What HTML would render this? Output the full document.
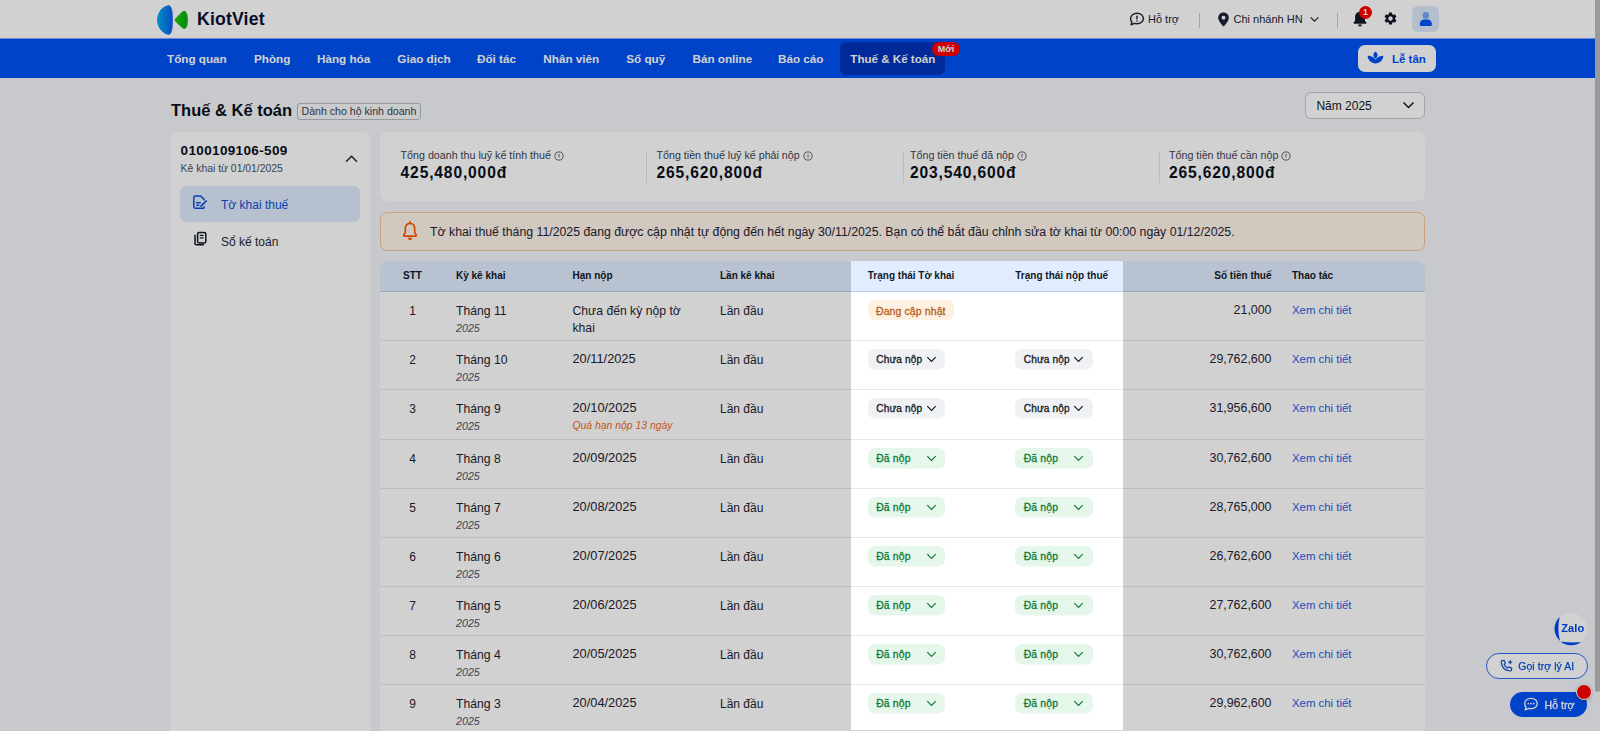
<!DOCTYPE html>
<html><head><meta charset="utf-8"><style>
html,body{margin:0;padding:0;width:1600px;height:731px;overflow:hidden;background:#f5f6f9}
body{position:relative;font-family:"Liberation Sans",sans-serif}
.t{position:absolute;line-height:1;white-space:nowrap}
.r{position:absolute}
</style></head><body>
<div class="r" style="left:0px;top:0px;width:1600px;height:38px;background:#fff"></div><svg class="r" style="left:150px;top:0" width="50" height="40" viewBox="150 0 50 40">
<defs><linearGradient id="lg" x1="0" x2="1" y1="0" y2="0"><stop offset="0" stop-color="#06b0f0"/><stop offset="1" stop-color="#0a5cf0"/></linearGradient>
<linearGradient id="lg2" x1="0" x2="1"><stop offset="0" stop-color="#20d010"/><stop offset="1" stop-color="#0aa514"/></linearGradient></defs>
<path d="M168.5 5.3 C171.5 5.6 172.8 10 172.8 20 C172.8 30 171.5 34.6 168.5 34.8 C163 34 157 28 157 20 C157 12 163 6 168.5 5.3 Z" fill="url(#lg)"/>
<path d="M184.2 10.8 C186.2 11 187.8 14 187.8 20 C187.8 26 186.2 28.8 184.2 29 C182.8 29 176 22.5 174.3 20 C176 17.5 182.8 10.8 184.2 10.8 Z" fill="url(#lg2)"/>
</svg><div class="t" style="left:197px;top:11.20px;font-size:17.6px;font-weight:bold;color:#0b1033;letter-spacing:0.2px">KiotViet</div><svg class="r" style="left:1129px;top:12px" width="16" height="14" viewBox="0 0 16 14"><path d="M8 1.2c3.6 0 6.4 2.4 6.4 5.3S11.6 11.8 8 11.8c-.9 0-1.8-.15-2.6-.45L2 12.8l.9-2.6C2 9.2 1.6 7.9 1.6 6.5 1.6 3.6 4.4 1.2 8 1.2z" fill="none" stroke="#1c2536" stroke-width="1.4" stroke-linejoin="round"/><rect x="7.3" y="3.6" width="1.4" height="3.8" rx=".6" fill="#1c2536"/><circle cx="8" cy="9" r=".8" fill="#1c2536"/></svg><div class="t" style="left:1148px;top:14.19px;font-size:11px;font-weight:normal;color:#1c2536;">Hỗ trợ</div><div class="r" style="left:1199px;top:13px;width:1px;height:15px;background:#c5c8ce"></div><svg class="r" style="left:1217px;top:12px" width="13" height="15" viewBox="0 0 13 15"><path d="M6.5 .6C3.3.6 1.2 3 1.2 5.8c0 3.3 3.7 7.3 5.3 8.8 1.6-1.5 5.3-5.5 5.3-8.8C11.8 3 9.7.6 6.5.6z" fill="#1c2536"/><circle cx="6.5" cy="5.7" r="1.9" fill="#fff"/></svg><div class="t" style="left:1233.5px;top:14.19px;font-size:11px;font-weight:normal;color:#1c2536;">Chi nhánh HN</div><svg class="r" style="left:1309px;top:15.5px" width="11" height="7" viewBox="0 0 11 7"><path d="M1.6 1.4 5.5 5.2 9.4 1.4" fill="none" stroke="#1c2536" stroke-width="1.15"/></svg><div class="r" style="left:1337px;top:13px;width:1px;height:15px;background:#c5c8ce"></div><svg class="r" style="left:1352px;top:10px" width="16" height="18" viewBox="0 0 16 18"><path d="M8 1.8c-2.9 0-4.9 2.2-4.9 5v3.4c0 .6-.3 1.1-.8 1.5-.6.5-.9.9-.9 1.3 0 .5.4.8.9.8h11.4c.5 0 .9-.3.9-.8 0-.4-.3-.8-.9-1.3-.5-.4-.8-.9-.8-1.5V6.8c0-2.8-2-5-4.9-5z" fill="#111827"/><path d="M6 14.6a2 2 0 0 0 4 0z" fill="#111827"/></svg><div class="r" style="left:1359px;top:6px;width:13px;height:13px;border-radius:50%;background:#ff0000;color:#fff;font:bold 9px/13px 'Liberation Sans';text-align:center">1</div><svg class="r" style="left:1383px;top:11px" width="15" height="15" viewBox="0 0 24 24"><path fill="#111827" d="M19.14 12.94c.04-.3.06-.61.06-.94 0-.32-.02-.64-.07-.94l2.03-1.58a.49.49 0 0 0 .12-.61l-1.92-3.32a.488.488 0 0 0-.59-.22l-2.39.96c-.5-.38-1.03-.7-1.62-.94l-.36-2.54a.484.484 0 0 0-.48-.41h-3.84c-.24 0-.43.17-.47.41l-.36 2.54c-.59.24-1.13.57-1.62.94l-2.39-.96a.49.49 0 0 0-.59.22L2.74 8.87c-.12.21-.08.47.12.61l2.03 1.58c-.05.3-.09.63-.09.94s.02.64.07.94l-2.03 1.58a.49.49 0 0 0-.12.61l1.92 3.32c.12.22.37.29.59.22l2.39-.96c.5.38 1.03.7 1.62.94l.36 2.54c.05.24.24.41.48.41h3.84c.24 0 .44-.17.47-.41l.36-2.54c.59-.24 1.13-.56 1.62-.94l2.39.96c.22.08.47 0 .59-.22l1.92-3.32c.12-.22.07-.47-.12-.61l-2.01-1.58zM12 15.6c-1.98 0-3.6-1.62-3.6-3.6s1.62-3.6 3.6-3.6 3.6 1.62 3.6 3.6-1.62 3.6-3.6 3.6z"/></svg><div class="r" style="left:1412px;top:5.5px;width:27px;height:26px;border-radius:6px;background:#dde8fa"></div><svg class="r" style="left:1412px;top:5.5px" width="27" height="26" viewBox="0 0 27 26"><circle cx="13.8" cy="9.4" r="3.3" fill="#74a6f0"/><path d="M7.9 19V17.8C7.9 15.5 9.7 13.6 12 13.6H15.6C17.9 13.6 19.8 15.5 19.8 17.8V19C19.8 19.6 19.4 20 18.8 20H8.9C8.3 20 7.9 19.6 7.9 19Z" fill="#0052f5"/></svg><div class="r" style="left:0px;top:38px;width:1600px;height:40px;background:#0052f5"></div><div class="r" style="left:0px;top:38px;width:1600px;height:1px;background:rgba(255,255,255,0.5)"></div><div class="r" style="left:840px;top:42px;width:105px;height:32.5px;background:#0032bc;border-radius:7px"></div><div class="t" style="left:167px;top:53.40px;font-size:11.7px;font-weight:bold;color:#fff;">Tổng quan</div><div class="t" style="left:254px;top:53.40px;font-size:11.7px;font-weight:bold;color:#fff;">Phòng</div><div class="t" style="left:317px;top:53.40px;font-size:11.7px;font-weight:bold;color:#fff;">Hàng hóa</div><div class="t" style="left:397.3px;top:53.40px;font-size:11.7px;font-weight:bold;color:#fff;">Giao dịch</div><div class="t" style="left:477px;top:53.40px;font-size:11.7px;font-weight:bold;color:#fff;">Đối tác</div><div class="t" style="left:543.3px;top:53.40px;font-size:11.7px;font-weight:bold;color:#fff;">Nhân viên</div><div class="t" style="left:626.3px;top:53.40px;font-size:11.7px;font-weight:bold;color:#fff;">Sổ quỹ</div><div class="t" style="left:692.5px;top:53.40px;font-size:11.7px;font-weight:bold;color:#fff;">Bán online</div><div class="t" style="left:778px;top:53.40px;font-size:11.7px;font-weight:bold;color:#fff;">Báo cáo</div><div class="t" style="left:850.3px;top:53.48px;font-size:11.6px;font-weight:bold;color:#fff;">Thuế &amp; Kế toán</div><div class="r" style="left:932px;top:42px;width:28px;height:14px;border-radius:7px;background:#ff0000;color:#fff;font:bold 9px/14px 'Liberation Sans';text-align:center">Mới</div><div class="r" style="left:1358px;top:45px;width:78px;height:27px;background:#fff;border-radius:7px"></div><svg class="r" style="left:1367px;top:51px" width="17" height="13" viewBox="0 0 17 13"><path d="M8.5 .4c1.3 1 2.1 2.3 2.1 3.6 0 1.5-.9 2.8-2.1 3.6C7.3 6.8 6.4 5.5 6.4 4c0-1.3.8-2.6 2.1-3.6z" fill="#0052f5"/><path d="M.6 4.8c2.6-.3 5.6.9 7.9 3.7 2.3-2.8 5.3-4 7.9-3.7-.4 4.6-3.8 7.6-7.9 7.6S1 9.4.6 4.8z" fill="#0052f5"/></svg><div class="t" style="left:1392px;top:53.57px;font-size:11.5px;font-weight:bold;color:#0052f5;">Lễ tân</div><div class="r" style="left:0px;top:78px;width:1600px;height:653px;background:#f5f6f9"></div><div class="t" style="left:171px;top:102.23px;font-size:16.5px;font-weight:bold;color:#0b0f1a;">Thuế &amp; Kế toán</div><div class="r" style="left:297px;top:103px;width:124px;height:16.5px;border:1px solid #b9bcc3;border-radius:3px;box-sizing:border-box;background:#f7f8fa"></div><div class="t" style="left:301.5px;top:106.13px;font-size:10.6px;font-weight:normal;color:#374151;">Dành cho hộ kinh doanh</div><div class="r" style="left:1305px;top:92px;width:120px;height:27px;border:1px solid #c4c8cf;border-radius:6px;box-sizing:border-box;background:#fff"></div><div class="t" style="left:1316.4px;top:99.84px;font-size:12px;font-weight:normal;color:#111827;">Năm 2025</div><svg class="r" style="left:1402px;top:101px" width="13" height="9" viewBox="0 0 13 9"><path d="M1.5 1.5 6.5 6.5 11.5 1.5" fill="none" stroke="#111827" stroke-width="1.5"/></svg><div class="r" style="left:170px;top:132px;width:200px;height:628px;background:#fff;border-radius:8px"></div><div class="t" style="left:180.6px;top:143.57px;font-size:13.5px;font-weight:bold;color:#0b0f1a;letter-spacing:0.35px">0100109106-509</div><div class="t" style="left:180.6px;top:163.50px;font-size:10.4px;font-weight:normal;color:#4b5263;">Kê khai từ 01/01/2025</div><svg class="r" style="left:344px;top:153px" width="15" height="11" viewBox="0 0 15 11"><path d="M2 8.7 7.5 3.2 13 8.7" fill="none" stroke="#1f2937" stroke-width="1.5"/></svg><div class="r" style="left:180px;top:185.5px;width:180px;height:36.5px;background:#deebfd;border-radius:6px"></div><svg class="r" style="left:192px;top:194px" width="16" height="16" viewBox="0 0 16 16"><path d="M12 6.2V5.4L8.6 2H3.2c-.8 0-1.4.6-1.4 1.4v9.4c0 .8.6 1.4 1.4 1.4h8c.5 0 .8-.3.8-.8v-1.2" fill="none" stroke="#0b4fd8" stroke-width="1.5" stroke-linejoin="round"/><path d="M4.2 8.7h4.6M4.2 11.2h3" stroke="#0b4fd8" stroke-width="1.4"/><path d="M9 12.2 14.2 7" stroke="#0b4fd8" stroke-width="1.7" stroke-linecap="round"/></svg><div class="t" style="left:221px;top:198.54px;font-size:12px;font-weight:normal;color:#0b4fd8;">Tờ khai thuế</div><svg class="r" style="left:193px;top:231px" width="15" height="15" viewBox="0 0 15 15"><rect x="4.6" y="1.4" width="8.2" height="10.6" rx="1.6" fill="none" stroke="#111827" stroke-width="1.5"/><path d="M2 4.2v8.2c0 .8.6 1.4 1.4 1.4h7" fill="none" stroke="#111827" stroke-width="1.5" stroke-linecap="round"/><path d="M6.8 4.4h3.8M6.8 6.8h3.8" stroke="#111827" stroke-width="1.3"/></svg><div class="t" style="left:221px;top:235.54px;font-size:12px;font-weight:normal;color:#1f2937;">Sổ kế toán</div><div class="r" style="left:380px;top:132px;width:1045px;height:69px;background:#fff;border-radius:8px"></div><div class="t" style="left:400.6px;top:150.19px;font-size:10.7px;color:#3d4352">Tổng doanh thu luỹ kế tính thuế<svg style="margin-left:3px;vertical-align:-2px" width="10" height="10" viewBox="0 0 10 10"><circle cx="5" cy="5" r="4.1" fill="none" stroke="#3d4352" stroke-width=".8"/><path d="M5 2.9v3.6" stroke="#3d4352" stroke-width=".8"/></svg></div><div class="t" style="left:400.6px;top:165.04px;font-size:15.6px;font-weight:bold;color:#0b0f1a;letter-spacing:0.85px">425,480,000đ</div><div class="t" style="left:656.5px;top:150.19px;font-size:10.7px;color:#3d4352">Tổng tiền thuế luỹ kế phải nộp<svg style="margin-left:3px;vertical-align:-2px" width="10" height="10" viewBox="0 0 10 10"><circle cx="5" cy="5" r="4.1" fill="none" stroke="#3d4352" stroke-width=".8"/><path d="M5 2.9v3.6" stroke="#3d4352" stroke-width=".8"/></svg></div><div class="t" style="left:656.5px;top:165.04px;font-size:15.6px;font-weight:bold;color:#0b0f1a;letter-spacing:0.85px">265,620,800đ</div><div class="t" style="left:910px;top:150.19px;font-size:10.7px;color:#3d4352">Tổng tiền thuế đã nộp<svg style="margin-left:3px;vertical-align:-2px" width="10" height="10" viewBox="0 0 10 10"><circle cx="5" cy="5" r="4.1" fill="none" stroke="#3d4352" stroke-width=".8"/><path d="M5 2.9v3.6" stroke="#3d4352" stroke-width=".8"/></svg></div><div class="t" style="left:910px;top:165.04px;font-size:15.6px;font-weight:bold;color:#0b0f1a;letter-spacing:0.85px">203,540,600đ</div><div class="t" style="left:1169px;top:150.19px;font-size:10.7px;color:#3d4352">Tổng tiền thuế cần nộp<svg style="margin-left:3px;vertical-align:-2px" width="10" height="10" viewBox="0 0 10 10"><circle cx="5" cy="5" r="4.1" fill="none" stroke="#3d4352" stroke-width=".8"/><path d="M5 2.9v3.6" stroke="#3d4352" stroke-width=".8"/></svg></div><div class="t" style="left:1169px;top:165.04px;font-size:15.6px;font-weight:bold;color:#0b0f1a;letter-spacing:0.85px">265,620,800đ</div><div class="r" style="left:646px;top:150.5px;width:1px;height:32.5px;background:#e3e5ea"></div><div class="r" style="left:902.5px;top:150.5px;width:1.0px;height:32.5px;background:#e3e5ea"></div><div class="r" style="left:1158.5px;top:150.5px;width:1.0px;height:32.5px;background:#e3e5ea"></div><div class="r" style="left:380px;top:212px;width:1045px;height:39px;background:#fff4ea;border:1px solid #f6c79d;border-radius:7px;box-sizing:border-box"></div><svg class="r" style="left:401px;top:221px" width="18" height="20" viewBox="0 0 18 20"><path d="M9 2.3C6 2.3 4.3 4.7 4.3 7.6v4L2.7 14c-.3.6 0 1.2.7 1.2h11.2c.7 0 1-.6.7-1.2l-1.6-2.4v-4c0-2.9-1.7-5.3-4.7-5.3z" fill="none" stroke="#ff5a00" stroke-width="1.7" stroke-linejoin="round"/><path d="M9 1v1.4" stroke="#ff5a00" stroke-width="1.8" stroke-linecap="round"/><path d="M6.8 16.8a2.2 2.2 0 0 0 4.4 0z" fill="#ff5a00"/></svg><div class="t" style="left:430px;top:225.69px;font-size:12.3px;font-weight:normal;color:#1f2330;">Tờ khai thuế tháng 11/2025 đang được cập nhật tự động đến hết ngày 30/11/2025. Bạn có thể bắt đầu chỉnh sửa tờ khai từ 00:00 ngày 01/12/2025.</div><div class="r" style="left:380px;top:261px;width:1045px;height:499px;background:#fff;border-radius:8px 8px 0 0"></div><div class="r" style="left:380px;top:261px;width:1045px;height:30px;background:#e1edfe;border-radius:8px 8px 0 0;border-bottom:1px solid #b8cdf0;box-sizing:content-box"></div><div class="t" style="left:403px;top:271.44px;font-size:10px;font-weight:bold;color:#111827;">STT</div><div class="t" style="left:456px;top:271.44px;font-size:10px;font-weight:bold;color:#111827;">Kỳ kê khai</div><div class="t" style="left:572.5px;top:271.44px;font-size:10px;font-weight:bold;color:#111827;">Hạn nộp</div><div class="t" style="left:720px;top:271.44px;font-size:10px;font-weight:bold;color:#111827;">Lần kê khai</div><div class="t" style="left:867.8px;top:271.44px;font-size:10px;font-weight:bold;color:#111827;">Trạng thái Tờ khai</div><div class="t" style="left:1015.3px;top:271.44px;font-size:10px;font-weight:bold;color:#111827;">Trạng thái nộp thuế</div><div class="t" style="right:328.5px;top:271.44px;font-size:10px;font-weight:bold;color:#111827">Số tiền thuế</div><div class="t" style="left:1292px;top:271.44px;font-size:10px;font-weight:bold;color:#111827;">Thao tác</div><div class="t" style="left:400px;width:25px;text-align:center;top:304.74px;font-size:12px;color:#1f2330">1</div><div class="t" style="left:456px;top:304.57px;font-size:12.2px;font-weight:normal;color:#1f2330;">Tháng 11</div><div class="t" style="left:456px;top:322.94px;font-size:10.7px;font-weight:normal;color:#4b5263;font-style:italic">2025</div><div class="t" style="left:572.5px;top:304.57px;font-size:12.2px;font-weight:normal;color:#1f2330;">Chưa đến kỳ nộp tờ</div><div class="t" style="left:572.5px;top:321.67px;font-size:12.2px;font-weight:normal;color:#1f2330;">khai</div><div class="t" style="left:720px;top:304.74px;font-size:12px;font-weight:normal;color:#1f2330;">Lần đầu</div><div class="r" style="left:867.5px;top:300.1px;width:86.5px;height:19.80000000000001px;background:#fff1e2;border-radius:6px"></div><div class="t" style="left:876.0px;top:305.51px;font-size:10.5px;font-weight:normal;color:#b5611a;-webkit-text-stroke:0.3px #b5611a;letter-spacing:0.1px">Đang cập nhật</div><div class="t" style="right:328.5px;top:304.40px;font-size:12.4px;color:#1f2330">21,000</div><div class="t" style="left:1292px;top:305.25px;font-size:11.4px;font-weight:normal;color:#2d5be3;">Xem chi tiết</div><div class="r" style="left:380px;top:340px;width:1045px;height:1px;background:#e6e8ec"></div><div class="t" style="left:400px;width:25px;text-align:center;top:353.74px;font-size:12px;color:#1f2330">2</div><div class="t" style="left:456px;top:353.57px;font-size:12.2px;font-weight:normal;color:#1f2330;">Tháng 10</div><div class="t" style="left:456px;top:371.94px;font-size:10.7px;font-weight:normal;color:#4b5263;font-style:italic">2025</div><div class="t" style="left:572.5px;top:353.06px;font-size:12.8px;font-weight:normal;color:#1f2330;">20/11/2025</div><div class="t" style="left:720px;top:353.74px;font-size:12px;font-weight:normal;color:#1f2330;">Lần đầu</div><div class="r" style="left:867.5px;top:349.1px;width:77.5px;height:20.0px;background:#eff1f4;border-radius:7px;box-shadow:0 1px 1px rgba(0,0,0,.03)"></div><div class="t" style="left:876.2px;top:355.15px;font-size:10.1px;font-weight:normal;color:#111827;-webkit-text-stroke:0.3px #111827;letter-spacing:0.15px">Chưa nộp</div><svg class="r" style="left:925.8px;top:356.1px" width="11" height="7" viewBox="0 0 11 7"><path d="M1.3 1.2 5.5 5.4 9.7 1.2" fill="none" stroke="#111827" stroke-width="1.2"/></svg><div class="r" style="left:1015px;top:349.1px;width:77.5px;height:20.0px;background:#eff1f4;border-radius:7px;box-shadow:0 1px 1px rgba(0,0,0,.03)"></div><div class="t" style="left:1023.7px;top:355.15px;font-size:10.1px;font-weight:normal;color:#111827;-webkit-text-stroke:0.3px #111827;letter-spacing:0.15px">Chưa nộp</div><svg class="r" style="left:1073.3px;top:356.1px" width="11" height="7" viewBox="0 0 11 7"><path d="M1.3 1.2 5.5 5.4 9.7 1.2" fill="none" stroke="#111827" stroke-width="1.2"/></svg><div class="t" style="right:328.5px;top:353.40px;font-size:12.4px;color:#1f2330">29,762,600</div><div class="t" style="left:1292px;top:354.25px;font-size:11.4px;font-weight:normal;color:#2d5be3;">Xem chi tiết</div><div class="r" style="left:380px;top:389px;width:1045px;height:1px;background:#e6e8ec"></div><div class="t" style="left:400px;width:25px;text-align:center;top:402.74px;font-size:12px;color:#1f2330">3</div><div class="t" style="left:456px;top:402.57px;font-size:12.2px;font-weight:normal;color:#1f2330;">Tháng 9</div><div class="t" style="left:456px;top:420.94px;font-size:10.7px;font-weight:normal;color:#4b5263;font-style:italic">2025</div><div class="t" style="left:572.5px;top:402.06px;font-size:12.8px;font-weight:normal;color:#1f2330;">20/10/2025</div><div class="t" style="left:572.5px;top:421.20px;font-size:10.4px;font-weight:normal;color:#f26a1b;font-style:italic">Quá hạn nộp 13 ngày</div><div class="t" style="left:720px;top:402.74px;font-size:12px;font-weight:normal;color:#1f2330;">Lần đầu</div><div class="r" style="left:867.5px;top:398.1px;width:77.5px;height:20.0px;background:#eff1f4;border-radius:7px;box-shadow:0 1px 1px rgba(0,0,0,.03)"></div><div class="t" style="left:876.2px;top:404.15px;font-size:10.1px;font-weight:normal;color:#111827;-webkit-text-stroke:0.3px #111827;letter-spacing:0.15px">Chưa nộp</div><svg class="r" style="left:925.8px;top:405.1px" width="11" height="7" viewBox="0 0 11 7"><path d="M1.3 1.2 5.5 5.4 9.7 1.2" fill="none" stroke="#111827" stroke-width="1.2"/></svg><div class="r" style="left:1015px;top:398.1px;width:77.5px;height:20.0px;background:#eff1f4;border-radius:7px;box-shadow:0 1px 1px rgba(0,0,0,.03)"></div><div class="t" style="left:1023.7px;top:404.15px;font-size:10.1px;font-weight:normal;color:#111827;-webkit-text-stroke:0.3px #111827;letter-spacing:0.15px">Chưa nộp</div><svg class="r" style="left:1073.3px;top:405.1px" width="11" height="7" viewBox="0 0 11 7"><path d="M1.3 1.2 5.5 5.4 9.7 1.2" fill="none" stroke="#111827" stroke-width="1.2"/></svg><div class="t" style="right:328.5px;top:402.40px;font-size:12.4px;color:#1f2330">31,956,600</div><div class="t" style="left:1292px;top:403.25px;font-size:11.4px;font-weight:normal;color:#2d5be3;">Xem chi tiết</div><div class="r" style="left:380px;top:439px;width:1045px;height:1px;background:#e6e8ec"></div><div class="t" style="left:400px;width:25px;text-align:center;top:452.74px;font-size:12px;color:#1f2330">4</div><div class="t" style="left:456px;top:452.57px;font-size:12.2px;font-weight:normal;color:#1f2330;">Tháng 8</div><div class="t" style="left:456px;top:470.94px;font-size:10.7px;font-weight:normal;color:#4b5263;font-style:italic">2025</div><div class="t" style="left:572.5px;top:452.06px;font-size:12.8px;font-weight:normal;color:#1f2330;">20/09/2025</div><div class="t" style="left:720px;top:452.74px;font-size:12px;font-weight:normal;color:#1f2330;">Lần đầu</div><div class="r" style="left:867.5px;top:448.1px;width:77.5px;height:20.0px;background:#e5f6eb;border-radius:7px;box-shadow:0 1px 1px rgba(0,0,0,.03)"></div><div class="t" style="left:876.2px;top:453.90px;font-size:10.4px;font-weight:normal;color:#0f7a35;-webkit-text-stroke:0.3px #0f7a35;letter-spacing:0.15px">Đã nộp</div><svg class="r" style="left:925.8px;top:455.1px" width="11" height="7" viewBox="0 0 11 7"><path d="M1.3 1.2 5.5 5.4 9.7 1.2" fill="none" stroke="#0f7a35" stroke-width="1.2"/></svg><div class="r" style="left:1015px;top:448.1px;width:77.5px;height:20.0px;background:#e5f6eb;border-radius:7px;box-shadow:0 1px 1px rgba(0,0,0,.03)"></div><div class="t" style="left:1023.7px;top:453.90px;font-size:10.4px;font-weight:normal;color:#0f7a35;-webkit-text-stroke:0.3px #0f7a35;letter-spacing:0.15px">Đã nộp</div><svg class="r" style="left:1073.3px;top:455.1px" width="11" height="7" viewBox="0 0 11 7"><path d="M1.3 1.2 5.5 5.4 9.7 1.2" fill="none" stroke="#0f7a35" stroke-width="1.2"/></svg><div class="t" style="right:328.5px;top:452.40px;font-size:12.4px;color:#1f2330">30,762,600</div><div class="t" style="left:1292px;top:453.25px;font-size:11.4px;font-weight:normal;color:#2d5be3;">Xem chi tiết</div><div class="r" style="left:380px;top:488px;width:1045px;height:1px;background:#e6e8ec"></div><div class="t" style="left:400px;width:25px;text-align:center;top:501.74px;font-size:12px;color:#1f2330">5</div><div class="t" style="left:456px;top:501.57px;font-size:12.2px;font-weight:normal;color:#1f2330;">Tháng 7</div><div class="t" style="left:456px;top:519.94px;font-size:10.7px;font-weight:normal;color:#4b5263;font-style:italic">2025</div><div class="t" style="left:572.5px;top:501.06px;font-size:12.8px;font-weight:normal;color:#1f2330;">20/08/2025</div><div class="t" style="left:720px;top:501.74px;font-size:12px;font-weight:normal;color:#1f2330;">Lần đầu</div><div class="r" style="left:867.5px;top:497.1px;width:77.5px;height:20.0px;background:#e5f6eb;border-radius:7px;box-shadow:0 1px 1px rgba(0,0,0,.03)"></div><div class="t" style="left:876.2px;top:502.90px;font-size:10.4px;font-weight:normal;color:#0f7a35;-webkit-text-stroke:0.3px #0f7a35;letter-spacing:0.15px">Đã nộp</div><svg class="r" style="left:925.8px;top:504.1px" width="11" height="7" viewBox="0 0 11 7"><path d="M1.3 1.2 5.5 5.4 9.7 1.2" fill="none" stroke="#0f7a35" stroke-width="1.2"/></svg><div class="r" style="left:1015px;top:497.1px;width:77.5px;height:20.0px;background:#e5f6eb;border-radius:7px;box-shadow:0 1px 1px rgba(0,0,0,.03)"></div><div class="t" style="left:1023.7px;top:502.90px;font-size:10.4px;font-weight:normal;color:#0f7a35;-webkit-text-stroke:0.3px #0f7a35;letter-spacing:0.15px">Đã nộp</div><svg class="r" style="left:1073.3px;top:504.1px" width="11" height="7" viewBox="0 0 11 7"><path d="M1.3 1.2 5.5 5.4 9.7 1.2" fill="none" stroke="#0f7a35" stroke-width="1.2"/></svg><div class="t" style="right:328.5px;top:501.40px;font-size:12.4px;color:#1f2330">28,765,000</div><div class="t" style="left:1292px;top:502.25px;font-size:11.4px;font-weight:normal;color:#2d5be3;">Xem chi tiết</div><div class="r" style="left:380px;top:537px;width:1045px;height:1px;background:#e6e8ec"></div><div class="t" style="left:400px;width:25px;text-align:center;top:550.74px;font-size:12px;color:#1f2330">6</div><div class="t" style="left:456px;top:550.57px;font-size:12.2px;font-weight:normal;color:#1f2330;">Tháng 6</div><div class="t" style="left:456px;top:568.94px;font-size:10.7px;font-weight:normal;color:#4b5263;font-style:italic">2025</div><div class="t" style="left:572.5px;top:550.06px;font-size:12.8px;font-weight:normal;color:#1f2330;">20/07/2025</div><div class="t" style="left:720px;top:550.74px;font-size:12px;font-weight:normal;color:#1f2330;">Lần đầu</div><div class="r" style="left:867.5px;top:546.1px;width:77.5px;height:20.0px;background:#e5f6eb;border-radius:7px;box-shadow:0 1px 1px rgba(0,0,0,.03)"></div><div class="t" style="left:876.2px;top:551.90px;font-size:10.4px;font-weight:normal;color:#0f7a35;-webkit-text-stroke:0.3px #0f7a35;letter-spacing:0.15px">Đã nộp</div><svg class="r" style="left:925.8px;top:553.1px" width="11" height="7" viewBox="0 0 11 7"><path d="M1.3 1.2 5.5 5.4 9.7 1.2" fill="none" stroke="#0f7a35" stroke-width="1.2"/></svg><div class="r" style="left:1015px;top:546.1px;width:77.5px;height:20.0px;background:#e5f6eb;border-radius:7px;box-shadow:0 1px 1px rgba(0,0,0,.03)"></div><div class="t" style="left:1023.7px;top:551.90px;font-size:10.4px;font-weight:normal;color:#0f7a35;-webkit-text-stroke:0.3px #0f7a35;letter-spacing:0.15px">Đã nộp</div><svg class="r" style="left:1073.3px;top:553.1px" width="11" height="7" viewBox="0 0 11 7"><path d="M1.3 1.2 5.5 5.4 9.7 1.2" fill="none" stroke="#0f7a35" stroke-width="1.2"/></svg><div class="t" style="right:328.5px;top:550.40px;font-size:12.4px;color:#1f2330">26,762,600</div><div class="t" style="left:1292px;top:551.25px;font-size:11.4px;font-weight:normal;color:#2d5be3;">Xem chi tiết</div><div class="r" style="left:380px;top:586px;width:1045px;height:1px;background:#e6e8ec"></div><div class="t" style="left:400px;width:25px;text-align:center;top:599.74px;font-size:12px;color:#1f2330">7</div><div class="t" style="left:456px;top:599.57px;font-size:12.2px;font-weight:normal;color:#1f2330;">Tháng 5</div><div class="t" style="left:456px;top:617.94px;font-size:10.7px;font-weight:normal;color:#4b5263;font-style:italic">2025</div><div class="t" style="left:572.5px;top:599.06px;font-size:12.8px;font-weight:normal;color:#1f2330;">20/06/2025</div><div class="t" style="left:720px;top:599.74px;font-size:12px;font-weight:normal;color:#1f2330;">Lần đầu</div><div class="r" style="left:867.5px;top:595.1px;width:77.5px;height:20.0px;background:#e5f6eb;border-radius:7px;box-shadow:0 1px 1px rgba(0,0,0,.03)"></div><div class="t" style="left:876.2px;top:600.90px;font-size:10.4px;font-weight:normal;color:#0f7a35;-webkit-text-stroke:0.3px #0f7a35;letter-spacing:0.15px">Đã nộp</div><svg class="r" style="left:925.8px;top:602.1px" width="11" height="7" viewBox="0 0 11 7"><path d="M1.3 1.2 5.5 5.4 9.7 1.2" fill="none" stroke="#0f7a35" stroke-width="1.2"/></svg><div class="r" style="left:1015px;top:595.1px;width:77.5px;height:20.0px;background:#e5f6eb;border-radius:7px;box-shadow:0 1px 1px rgba(0,0,0,.03)"></div><div class="t" style="left:1023.7px;top:600.90px;font-size:10.4px;font-weight:normal;color:#0f7a35;-webkit-text-stroke:0.3px #0f7a35;letter-spacing:0.15px">Đã nộp</div><svg class="r" style="left:1073.3px;top:602.1px" width="11" height="7" viewBox="0 0 11 7"><path d="M1.3 1.2 5.5 5.4 9.7 1.2" fill="none" stroke="#0f7a35" stroke-width="1.2"/></svg><div class="t" style="right:328.5px;top:599.40px;font-size:12.4px;color:#1f2330">27,762,600</div><div class="t" style="left:1292px;top:600.25px;font-size:11.4px;font-weight:normal;color:#2d5be3;">Xem chi tiết</div><div class="r" style="left:380px;top:635px;width:1045px;height:1px;background:#e6e8ec"></div><div class="t" style="left:400px;width:25px;text-align:center;top:648.74px;font-size:12px;color:#1f2330">8</div><div class="t" style="left:456px;top:648.57px;font-size:12.2px;font-weight:normal;color:#1f2330;">Tháng 4</div><div class="t" style="left:456px;top:666.94px;font-size:10.7px;font-weight:normal;color:#4b5263;font-style:italic">2025</div><div class="t" style="left:572.5px;top:648.06px;font-size:12.8px;font-weight:normal;color:#1f2330;">20/05/2025</div><div class="t" style="left:720px;top:648.74px;font-size:12px;font-weight:normal;color:#1f2330;">Lần đầu</div><div class="r" style="left:867.5px;top:644.1px;width:77.5px;height:20.0px;background:#e5f6eb;border-radius:7px;box-shadow:0 1px 1px rgba(0,0,0,.03)"></div><div class="t" style="left:876.2px;top:649.90px;font-size:10.4px;font-weight:normal;color:#0f7a35;-webkit-text-stroke:0.3px #0f7a35;letter-spacing:0.15px">Đã nộp</div><svg class="r" style="left:925.8px;top:651.1px" width="11" height="7" viewBox="0 0 11 7"><path d="M1.3 1.2 5.5 5.4 9.7 1.2" fill="none" stroke="#0f7a35" stroke-width="1.2"/></svg><div class="r" style="left:1015px;top:644.1px;width:77.5px;height:20.0px;background:#e5f6eb;border-radius:7px;box-shadow:0 1px 1px rgba(0,0,0,.03)"></div><div class="t" style="left:1023.7px;top:649.90px;font-size:10.4px;font-weight:normal;color:#0f7a35;-webkit-text-stroke:0.3px #0f7a35;letter-spacing:0.15px">Đã nộp</div><svg class="r" style="left:1073.3px;top:651.1px" width="11" height="7" viewBox="0 0 11 7"><path d="M1.3 1.2 5.5 5.4 9.7 1.2" fill="none" stroke="#0f7a35" stroke-width="1.2"/></svg><div class="t" style="right:328.5px;top:648.40px;font-size:12.4px;color:#1f2330">30,762,600</div><div class="t" style="left:1292px;top:649.25px;font-size:11.4px;font-weight:normal;color:#2d5be3;">Xem chi tiết</div><div class="r" style="left:380px;top:684px;width:1045px;height:1px;background:#e6e8ec"></div><div class="t" style="left:400px;width:25px;text-align:center;top:697.74px;font-size:12px;color:#1f2330">9</div><div class="t" style="left:456px;top:697.57px;font-size:12.2px;font-weight:normal;color:#1f2330;">Tháng 3</div><div class="t" style="left:456px;top:715.94px;font-size:10.7px;font-weight:normal;color:#4b5263;font-style:italic">2025</div><div class="t" style="left:572.5px;top:697.06px;font-size:12.8px;font-weight:normal;color:#1f2330;">20/04/2025</div><div class="t" style="left:720px;top:697.74px;font-size:12px;font-weight:normal;color:#1f2330;">Lần đầu</div><div class="r" style="left:867.5px;top:693.1px;width:77.5px;height:20.0px;background:#e5f6eb;border-radius:7px;box-shadow:0 1px 1px rgba(0,0,0,.03)"></div><div class="t" style="left:876.2px;top:698.90px;font-size:10.4px;font-weight:normal;color:#0f7a35;-webkit-text-stroke:0.3px #0f7a35;letter-spacing:0.15px">Đã nộp</div><svg class="r" style="left:925.8px;top:700.1px" width="11" height="7" viewBox="0 0 11 7"><path d="M1.3 1.2 5.5 5.4 9.7 1.2" fill="none" stroke="#0f7a35" stroke-width="1.2"/></svg><div class="r" style="left:1015px;top:693.1px;width:77.5px;height:20.0px;background:#e5f6eb;border-radius:7px;box-shadow:0 1px 1px rgba(0,0,0,.03)"></div><div class="t" style="left:1023.7px;top:698.90px;font-size:10.4px;font-weight:normal;color:#0f7a35;-webkit-text-stroke:0.3px #0f7a35;letter-spacing:0.15px">Đã nộp</div><svg class="r" style="left:1073.3px;top:700.1px" width="11" height="7" viewBox="0 0 11 7"><path d="M1.3 1.2 5.5 5.4 9.7 1.2" fill="none" stroke="#0f7a35" stroke-width="1.2"/></svg><div class="t" style="right:328.5px;top:697.40px;font-size:12.4px;color:#1f2330">29,962,600</div><div class="t" style="left:1292px;top:698.25px;font-size:11.4px;font-weight:normal;color:#2d5be3;">Xem chi tiết</div><div class="r" style="left:850.5px;top:261px;width:272.8px;height:468.5px;box-shadow:0 0 0 3000px rgba(0,0,0,0.18)"></div><div class="r" style="left:0;top:0;width:1600px;height:731px;filter:brightness(0.82)"><div class="r" style="left:1554.5px;top:612.8px;width:32.5px;height:32.5px;border-radius:50%;background:#fff"></div><svg class="r" style="left:1552px;top:611px" width="37" height="37" viewBox="0 0 37 37"><path d="M7.7 6A16.2 16.2 0 0 0 8 30A50 50 0 0 1 7.7 6Z" fill="#0047f0"/><path d="M8.6 30.4A16.2 16.2 0 0 0 29 31A80 80 0 0 1 8.6 30.4Z" fill="#0047f0"/></svg><div class="t" style="left:1561.2px;top:623.29px;font-size:11px;font-weight:bold;color:#0047f0;letter-spacing:0.1px">Zalo</div><div class="r" style="left:1486px;top:653px;width:102px;height:26px;background:#fff;border:1px solid #2b6cf0;border-radius:13px;box-sizing:border-box"></div><svg class="r" style="left:1499px;top:659px" width="15" height="15" viewBox="0 0 15 15"><path d="M3.2 1.6 5.1 1.4l1.3 2.9-1.2 1.2c.7 1.6 1.9 2.8 3.4 3.5l1.2-1.2 2.9 1.3-.2 1.9c-.1.6-.6 1-1.2 1C5.9 11.6 2.5 8.1 2.2 2.8c0-.6.4-1.1 1-1.2z" fill="none" stroke="#0b4fd8" stroke-width="1.2" stroke-linejoin="round"/><path d="M11.2 1.2l.5 1.5 1.5.5-1.5.5-.5 1.5-.5-1.5-1.5-.5 1.5-.5z" fill="#0b4fd8" stroke="#0b4fd8" stroke-width=".6"/></svg><div class="t" style="left:1518.3px;top:662.20px;font-size:10.4px;font-weight:normal;color:#0b4fd8;-webkit-text-stroke:0.25px #0b4fd8;letter-spacing:0.1px">Gọi trợ lý AI</div><div class="r" style="left:1510px;top:692px;width:77px;height:25px;background:#0052f5;border-radius:12.5px"></div><svg class="r" style="left:1523px;top:697px" width="16" height="15" viewBox="0 0 16 15"><path d="M8 1.3c3.5 0 6.3 2.3 6.3 5.2S11.5 11.7 8 11.7c-.8 0-1.6-.1-2.3-.4L2.2 13l.9-2.7C2.2 9.3 1.7 8 1.7 6.5 1.7 3.6 4.5 1.3 8 1.3z" fill="none" stroke="#fff" stroke-width="1.3" stroke-linejoin="round"/><circle cx="5.3" cy="6.6" r=".9" fill="#fff"/><circle cx="8" cy="6.6" r=".9" fill="#fff"/><circle cx="10.7" cy="6.6" r=".9" fill="#fff"/></svg><div class="t" style="left:1544.6px;top:700.03px;font-size:10.6px;font-weight:normal;color:#fff;-webkit-text-stroke:0.3px #fff">Hỗ trợ</div><div class="r" style="left:1576px;top:684px;width:16px;height:16px;border-radius:50%;background:#ff0000;border:1.5px solid #fff;box-sizing:border-box;box-shadow:0 1px 3px rgba(0,0,0,.3)"></div></div><div class="r" style="left:1595px;top:0px;width:5px;height:692px;background:#9a9a9a;border-radius:0 0 3px 3px"></div>
</body></html>
